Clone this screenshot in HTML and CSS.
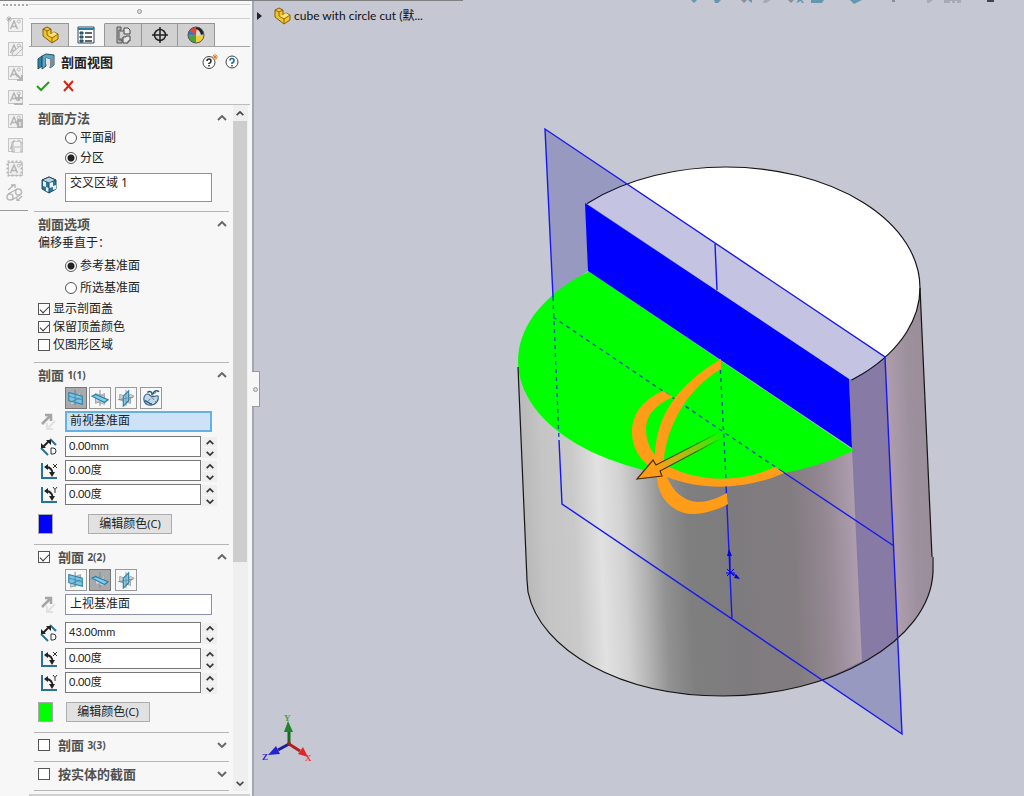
FILE: index.html
```html
<!DOCTYPE html>
<html lang="zh-CN">
<head>
<meta charset="utf-8">
<title>剖面视图</title>
<link rel="stylesheet" href="styles.css">
</head>
<body>
<svg class="defs" aria-hidden="true">
  <defs>
    <symbol id="note" viewBox="0 0 17 17"><rect x="2.500" y="2.500" width="14" height="13" fill="#f0f0f0" stroke="#c6c6c6"/><path d="M4.500 13 8 5l3.500 8M5.800 10.500h4.400" fill="none" stroke="#b4b4b4" stroke-width="1.500"/><circle cx="12.800" cy="5.500" r="1.500" fill="none" stroke="#bcbcbc"/></symbol>
    <symbol id="part" viewBox="0 0 18 18"><path d="M2 3 6 1l4 2v5l3-2 4 2v5l-6 4L2 10z" fill="#f4c62c" stroke="#7b5a12"/><path d="m2 3 4 2 4-2M6 5v4l5 3 6-4M11 12v5" fill="none" stroke="#8d6814"/><path d="m7 9 3-1 3-2 3 2-5 3z" fill="#ffe47a"/></symbol>
    <symbol id="up" viewBox="0 0 12 8"><path d="m2 6 4-4 4 4" fill="none" stroke="currentColor" stroke-width="1.900"/></symbol>
    <symbol id="down" viewBox="0 0 12 8"><path d="m2 2 4 4 4-4" fill="none" stroke="currentColor" stroke-width="1.900"/></symbol>
    <symbol id="front" viewBox="0 0 20 20"><path d="m4 8 11-4v10L4 18z" fill="#c8cdd0" stroke="#9aa1a5"/><path d="m2 4 15 4v9L2 13z" fill="#75c6e8" stroke="#2d7fa6" stroke-width="1.200"/><path d="M9 1v17M2 8l15 4M5 14l10-4" fill="none" stroke="#4b7f99" stroke-width=".9"/></symbol>
    <symbol id="top" viewBox="0 0 20 20"><path d="m5 5 10 3v9L5 14zM5 10l10-5v6L5 16z" fill="#d6d6d6" stroke="#a4a4a4"/><path d="m1 8 4-2 14 6-4 3z" fill="#7dcdf0" stroke="#287ca5" stroke-width="1.200"/><path d="M10 1v6m0 8v4" fill="none" stroke="#708b98"/></symbol>
    <symbol id="right" viewBox="0 0 20 20"><path d="m3 6 12 4v6L3 12zM5 12l10-6 4 2-10 7z" fill="#d2d2d2" stroke="#a0a0a0"/><path d="m7 8 6-6v11l-6 6z" fill="#82cdef" stroke="#287ca5" stroke-width="1.200"/><path d="M10 1v18M1 12l17-3" fill="none" stroke="#65838f" stroke-width=".8"/></symbol>
    <symbol id="face" viewBox="0 0 20 20"><path d="M2 11c0-5 4-7 7-4 4 4 6-1 9 1 1 5-3 10-9 10-4 0-7-3-7-7z" fill="#c2d8ea" stroke="#2b5d86" stroke-width="1.200"/><path d="M6 4c3-3 6 0 5 3m1-1c1-4 4-5 7-3M3 13c3 0 4 3 8 4" fill="none" stroke="#27587d" stroke-width="1.600"/><path d="m8 6 9 10M4 17 16 3" stroke="#4d6877" stroke-dasharray="3 2"/></symbol>
    <symbol id="flip" viewBox="0 0 18 18"><path d="m2 11 8-8M5 2h6v6" fill="none" stroke="#a5a5a5" stroke-width="2.500"/><path d="m15 8-7 7M7 10v6h6" fill="none" stroke="#e2e2e2" stroke-width="2"/></symbol>
    <symbol id="dist" viewBox="0 0 18 18"><path d="m1 10 7 7M10 1l6 6" stroke="#2c7192" stroke-width="2"/><path d="m3 9 6-6" stroke="#222" stroke-width="2"/><path d="M1 10V5l5 5zM6 2h5v5z" fill="#222"/><path d="M11 10v6h2q3 0 3-3t-3-3z" fill="#fff" stroke="#333"/></symbol>
    <symbol id="ang" viewBox="0 0 18 18"><path d="M2 1v15h15" fill="none" stroke="#28739b" stroke-width="2"/><path d="M7 5q5 1 5.500 6" fill="none" stroke="#222" stroke-width="1.800"/><path d="m4 5 4-3v6zM9 10h6l-3 5z" fill="#222"/></symbol>
    <symbol id="angx" viewBox="0 0 18 18"><use href="#ang"/><path d="m13 2 4 4m0-4-4 4" stroke="#333"/></symbol>
    <symbol id="angy" viewBox="0 0 18 18"><use href="#ang"/><path d="m13 1 2 2.500L17 1m-2 2.500V7" fill="none" stroke="#333"/></symbol>
  </defs>
</svg>

<div class="app">
  <nav class="rail" aria-label="注解">
    <button aria-label="新建"><svg><use href="#note"/><path d="M3 0v6M0 3h6M1 1l4 4m0-4L1 5" stroke="#aaa" stroke-width=".8"/></svg></button>
    <button aria-label="编辑"><svg><use href="#note"/><path d="m6 13 1 3 3-1 7-7-3-2z" fill="#eee" stroke="#b6b6b6"/></svg></button>
    <button aria-label="插入"><svg><use href="#note"/><path d="M10 10l6 6m0-5v5h-5" fill="none" stroke="#b4b4b4" stroke-width="2"/></svg></button>
    <button aria-label="增减"><svg><use href="#note"/><path d="M13 6v7M9 10h8M8 16h9" stroke="#b4b4b4" stroke-width="2"/></svg></button>
    <button aria-label="锁定"><svg><use href="#note"/><rect x="11" y="7" width="6" height="9" rx="1" fill="#b3b3b3"/><path d="M13 10h2v4h-2z" fill="#ddd"/></svg></button>
    <button aria-label="保存"><svg><use href="#note"/><path d="M6 6h9l2 2v8H6z" fill="#d4d4d4" stroke="#b4b4b4"/><path d="M8 6h6v4H8zM9 12h5v4H9z" fill="#f3f3f3"/></svg></button>
    <button aria-label="选择"><svg><use href="#note"/><rect x="1.500" y="1.500" width="14" height="14" fill="none" stroke="#b8b8b8" stroke-width="2" stroke-dasharray="2 2"/></svg></button>
    <button aria-label="链接"><svg><circle cx="4" cy="13" r="3" fill="none" stroke="#bbb" stroke-width="1.500"/><circle cx="12.500" cy="8" r="3" fill="none" stroke="#bbb" stroke-width="1.500"/><path d="m2 10 9-5m-5 11 8-5M2 6l6-5M5 1h4v3m7 8-5 5m0-3v3h3" fill="none" stroke="#b3b3b3" stroke-width="1.300"/></svg></button>
  </nav>

  <aside class="panel">
    <div class="grip"><span class="dot"></span></div>
    <nav class="tabs" aria-label="管理器">
      <button class="tab" aria-label="设计树"><svg viewBox="0 0 18 18"><use href="#part"/></svg></button>
      <button class="tab tab-on" aria-label="属性"><svg viewBox="0 0 18 18"><path d="M1 1h16v16H1z" fill="#fff" stroke="#345"/><path d="M1 2h16v2H1z" fill="#267da8"/><path d="M3 6h3v2H3zm0 4h3v2H3zm0 4h3v2H3z" fill="#267da8" stroke="#245"/><path d="M8 7h7M8 11h7M8 15h7" stroke="#333" stroke-width="1.500"/></svg></button>
      <button class="tab" aria-label="配置"><svg viewBox="0 0 18 18"><path d="M3 1h4v3H5v10h3v3H3z" fill="#b5b5b5" stroke="#555"/><path d="M10 2h4l2 2v4h-6zM9 11h3v-1h4v5h-2v2H9z" fill="#e8e8e8" stroke="#444"/><path d="M6 5h4M6 13h3" stroke="#555"/></svg></button>
      <button class="tab" aria-label="尺寸"><svg viewBox="0 0 18 18"><circle cx="9" cy="9" r="5.500" fill="none" stroke="#222" stroke-width="1.500"/><path d="M9 1v16M1 9h16" stroke="#222" stroke-width="1.500"/></svg></button>
      <button class="tab" aria-label="外观"><svg viewBox="0 0 18 18"><circle cx="9" cy="9" r="8" fill="#f1cf32"/><path d="M9 10 1 9a8 8 0 0 0 8 8z" fill="#42a344"/><path d="M9 10 1 9a8 8 0 0 1 3-6z" fill="#3578c8"/><path d="M9 10 3 4a8 8 0 0 1 7-3z" fill="#e64236"/><path d="m9 10 1-9a8 8 0 0 1 7 8z" fill="#d9dadd"/><path d="M9 1q6-1 8 7l-3 1Q13 4 9 3z" fill="#222"/><circle cx="9" cy="9" r="8" fill="none" stroke="#555"/></svg></button>
    </nav>
    <header class="title">
      <svg class="title-icon" viewBox="0 0 18 18"><path d="m1 6 4-3v10l-4 3z" fill="#2885ad" stroke="#254b60"/><path d="m5 3 4-2 8 1v10l-4 3V6L9 5v8l-4 3V6z" fill="#5ba7c6" stroke="#254b60"/><path d="m9 5 4 1v8l-4-3z" fill="#e1e5e8"/><path d="m13 6 4-3v9l-4 3z" fill="#7b8c96"/></svg>
      <h1>剖面视图</h1>
      <button class="bare" aria-label="详细帮助"><svg viewBox="0 0 16 16"><circle cx="7" cy="8.500" r="6" fill="#fff" stroke="#444"/><path d="M5 7q0-2 2-2t2 2-2 2.500V10m0 1v1.500" fill="none" stroke="#222" stroke-width="1.500"/><path d="M13 0v6M10 3h6M11 1l4 4m0-4-4 4" stroke="#dc8132"/></svg></button>
      <button class="bare" aria-label="帮助"><svg viewBox="0 0 16 16"><circle cx="8" cy="8" r="6" fill="#fff" stroke="#444"/><path d="M6 6.500q0-2 2-2t2 2T8 9v1m0 1v1.500" fill="none" stroke="#246f9c" stroke-width="1.700"/></svg></button>
    </header>
    <div class="confirm">
      <button class="bare" aria-label="确定"><svg viewBox="0 0 14 14"><path d="m1 7 4 4 8-8" fill="none" stroke="#299c1a" stroke-width="2"/></svg></button>
      <button class="bare" aria-label="取消"><svg viewBox="0 0 14 14"><path d="m2 2 9 10m0-10L2 12" fill="none" stroke="#d9230f" stroke-width="2"/></svg></button>
    </div>

    <div class="scroll">
      <form class="sections">
        <section class="sec sec-method">
          <h2>剖面方法<svg class="chev"><use href="#up"/></svg></h2>
          <label class="opt inset"><input type="radio" name="method">平面副</label>
          <label class="opt inset"><input type="radio" name="method" checked>分区</label>
          <div class="row region">
            <svg class="ico" viewBox="0 0 18 18"><path d="m2 4 7-3 7 3v9l-7 4-7-4z" fill="#2879a2" stroke="#244b60"/><path d="m2 4 7 3 7-3-7-3z" fill="#b7d4e1" stroke="#244b60"/><path d="m3 5 3 1v5l-3-1zM6 11l3 1v4l-3-1zM9 7l4-1v5l-4 1zM13 10l3-1v4l-3 1z" fill="#e6f2f6"/><path d="M9 7v10" stroke="#244b60"/></svg>
            <textarea aria-label="交叉区域" readonly>交叉区域 1</textarea>
          </div>
        </section>

        <section class="sec sec-options">
          <h2>剖面选项<svg class="chev"><use href="#up"/></svg></h2>
          <p>偏移垂直于：</p>
          <div class="radios">
            <label class="opt inset tall"><input type="radio" name="offset" checked>参考基准面</label>
            <label class="opt inset tall"><input type="radio" name="offset">所选基准面</label>
          </div>
          <label class="opt"><input type="checkbox" checked>显示剖面盖</label>
          <label class="opt"><input type="checkbox" checked>保留顶盖颜色</label>
          <label class="opt"><input type="checkbox">仅图形区域</label>
        </section>

        <section class="sec sec-plane">
          <h2>剖面&nbsp;<small>1(1)</small><svg class="chev"><use href="#up"/></svg></h2>
          <div class="tools">
            <button type="button" class="tool tool-on" aria-label="前视"><svg><use href="#front"/></svg></button>
            <button type="button" class="tool" aria-label="上视"><svg><use href="#top"/></svg></button>
            <button type="button" class="tool spaced" aria-label="右视"><svg><use href="#right"/></svg></button>
            <button type="button" class="tool" aria-label="面"><svg><use href="#face"/></svg></button>
          </div>
          <div class="row"><svg class="ico"><use href="#flip"/></svg><input class="pick pick-on" aria-label="参考剖面 1" value="前视基准面"></div>
          <div class="spins">
            <div class="row"><svg class="ico"><use href="#dist"/></svg><input class="num" aria-label="等距距离 1" value="0.00mm"><span class="step"><button type="button" aria-label="增加"><svg><use href="#up"/></svg></button><button type="button" aria-label="减少"><svg><use href="#down"/></svg></button></span></div>
            <div class="row"><svg class="ico"><use href="#angx"/></svg><input class="num" aria-label="X 旋转 1" value="0.00度"><span class="step"><button type="button" aria-label="增加"><svg><use href="#up"/></svg></button><button type="button" aria-label="减少"><svg><use href="#down"/></svg></button></span></div>
            <div class="row"><svg class="ico"><use href="#angy"/></svg><input class="num" aria-label="Y 旋转 1" value="0.00度"><span class="step"><button type="button" aria-label="增加"><svg><use href="#up"/></svg></button><button type="button" aria-label="减少"><svg><use href="#down"/></svg></button></span></div>
          </div>
          <div class="color color-wide"><span class="swatch blue"></span><button type="button" class="edit">编辑颜色<small>(C)</small></button></div>
        </section>

        <section class="sec sec-plane sec-second">
          <h2><label><input type="checkbox" checked>剖面&nbsp;<small>2(2)</small></label><svg class="chev"><use href="#up"/></svg></h2>
          <div class="tools">
            <button type="button" class="tool" aria-label="前视"><svg><use href="#front"/></svg></button>
            <button type="button" class="tool tool-on" aria-label="上视"><svg><use href="#top"/></svg></button>
            <button type="button" class="tool spaced" aria-label="右视"><svg><use href="#right"/></svg></button>
          </div>
          <div class="row"><svg class="ico"><use href="#flip"/></svg><input class="pick" aria-label="参考剖面 2" value="上视基准面"></div>
          <div class="spins">
            <div class="row"><svg class="ico"><use href="#dist"/></svg><input class="num" aria-label="等距距离 2" value="43.00mm"><span class="step"><button type="button" aria-label="增加"><svg><use href="#up"/></svg></button><button type="button" aria-label="减少"><svg><use href="#down"/></svg></button></span></div>
            <div class="row"><svg class="ico"><use href="#angx"/></svg><input class="num" aria-label="X 旋转 2" value="0.00度"><span class="step"><button type="button" aria-label="增加"><svg><use href="#up"/></svg></button><button type="button" aria-label="减少"><svg><use href="#down"/></svg></button></span></div>
            <div class="row"><svg class="ico"><use href="#angy"/></svg><input class="num" aria-label="Y 旋转 2" value="0.00度"><span class="step"><button type="button" aria-label="增加"><svg><use href="#up"/></svg></button><button type="button" aria-label="减少"><svg><use href="#down"/></svg></button></span></div>
          </div>
          <div class="color"><span class="swatch green"></span><button type="button" class="edit">编辑颜色<small>(C)</small></button></div>
        </section>

        <section class="sec sec-closed">
          <h2><label><input type="checkbox">剖面&nbsp;<small>3(3)</small></label><svg class="chev"><use href="#down"/></svg></h2>
        </section>
        <section class="sec sec-closed">
          <h2><label><input type="checkbox">按实体的截面</label><svg class="chev"><use href="#down"/></svg></h2>
        </section>
      </form>
      <div class="bar">
        <button aria-label="向上滚动"><svg><use href="#up"/></svg></button>
        <div class="track"><div class="thumb"></div></div>
        <button aria-label="向下滚动"><svg><use href="#down"/></svg></button>
      </div>
    </div>
    <div class="foot"></div>
  </aside>

  <main class="view">
    <svg class="scene" viewBox="252 0 772 796" preserveAspectRatio="xMinYMin meet" role="img" aria-label="剖切圆柱体">
      <defs>
        <clipPath id="behind"><path d="M480 132 960 453V132Z"/></clipPath>
        <clipPath id="before"><path d="M480 198 960 522H480Z"/></clipPath>
        <linearGradient id="side" gradientUnits="userSpaceOnUse" x1="528" y1="590" x2="933" y2="572">
          <stop offset="0" stop-color="#b9b9b9"/><stop offset=".05" stop-color="#c5c5c5"/><stop offset=".12" stop-color="#c9c9c9"/><stop offset=".185" stop-color="#e1e1e1"/><stop offset=".24" stop-color="#d2d2d2"/><stop offset=".29" stop-color="#b4b4b4"/><stop offset=".34" stop-color="#919191"/><stop offset=".4" stop-color="#7f7f7f"/><stop offset=".52" stop-color="#7e7b7e"/><stop offset=".66" stop-color="#827c80"/><stop offset=".74" stop-color="#948892"/><stop offset=".82" stop-color="#b09fb0"/><stop offset=".9" stop-color="#b09fb0"/><stop offset=".96" stop-color="#9d909d"/><stop offset="1" stop-color="#9b8e9b"/>
        </linearGradient>
        <linearGradient id="arrow" gradientUnits="userSpaceOnUse" x1="656" y1="468" x2="720" y2="434">
          <stop offset="0" stop-color="#ff9d18"/><stop offset=".5" stop-color="#a2c010"/><stop offset="1" stop-color="#16f600"/>
        </linearGradient>
        <linearGradient id="arrowline" gradientUnits="userSpaceOnUse" x1="656" y1="468" x2="720" y2="434">
          <stop offset="0" stop-color="#4a2b00"/><stop offset=".6" stop-color="#317000"/><stop offset="1" stop-color="#00ff00"/>
        </linearGradient>
      </defs>
      <g fill="#6598b0">
        <path d="M691 0h6l-3 3zM714 0h7l-3 3h-3zM811 0h13l-2 3h-11zM850 0h12l-8 4z"/>
        <path d="M748 0h4v3zM796 3l2-3h4l2 3h-2l-1-2z"/>
      </g>
      <path d="M741 0h6l-3 3zM788 0h6l-3 3zM892 0h3v2h-3z" fill="#888f96"/>
      <path d="M764 0h7l-5 3h-3zM927 0h6l-4 3h-2zM944 0h17v3h-4V1h-2v2h-3V1h-2v2h-6z" fill="#a7abb5"/>
      <path d="M987 0h7v2h-7z" fill="#444"/>

      <path d="M518 367 527 580 528 592C540 650 620 696 723 696 830 696 930 642 933 572L932 557 920 288 849 379 852 449Z" fill="url(#side)"/>
      <ellipse cx="726" cy="288" rx="194" ry="121" fill="#fff" stroke="#151515" stroke-width="1.200" clip-path="url(#behind)"/>
      <path d="M545 129 885 357 902 734 821 680Q842 672 862 661L852 449 849 379 588 271 553 297Z" fill="#000080" fill-opacity=".23"/>
      <ellipse cx="721" cy="361" rx="203" ry="118" fill="#00ff00" clip-path="url(#before)"/>
      <path d="M585 203 849 379 852 448 588 271Z" fill="#0000ff"/>
      <g fill="none" stroke="#151515" stroke-width="1.200">
        <path d="M920 288 932 557"/>
        <path d="M518 367 527 580 528 592C540 650 620 696 723 696 830 696 930 642 933 572V557"/>
      </g>
      <g fill="none" stroke="#1818ee" stroke-width="1.400">
        <path d="M553 297 545 129 885 357 902 734 562 504 559 440M715 244 717 290M726 484 732 619M780 470 894 546"/>
        <path d="M553 297 559 440M553 317 780 470M720 362 726 480" stroke="#0058a8" stroke-dasharray="4 4"/>
      </g>
      <g fill="#ff9d18">
        <path d="M721 359C677 385 655 417 655 458L657 480C660 504 679 515 695 514 709 513 719 509 728 504L727 493C716 499 707 502 697 502 684 501 673 492 667 477L664 458C668 424 688 388 721 369Z"/>
        <path d="M663 391 673 397C655 405 646 415 646 429 646 446 655 459 670 467 702 483 742 482 775 467L784 473C744 491 700 490 667 477 643 467 632 450 632 432 632 412 645 399 663 391Z"/>
      </g>
      <path d="M720 432 656 465 653 460 637 479 662 476 660 471 722 438" fill="url(#arrow)" stroke="url(#arrowline)" stroke-width="1.200"/>
      <g stroke="#0000ee" fill="#0000ee">
        <path d="M730 573v-20M727 569l7 7m0-7-7 7M726 573h9M731 573l6 3" fill="none"/>
        <path d="m729 549-2 7h5zM740 579l-4-5-2 4z" stroke="none"/>
      </g>

      <g class="triad">
        <path d="M289 744v-13" stroke="#176b1d" stroke-width="3"/><path d="m288 721-4 11h9z" fill="#21832a"/>
        <path d="m289 744 11 7" stroke="#b51d20" stroke-width="3"/><path d="m308 757-5-10-5 7z" fill="#e12627"/>
        <path d="m289 744-11 6" stroke="#1c1c9c" stroke-width="3"/><path d="m268 755 8-9 4 8z" fill="#2424cf"/>
        <circle cx="289" cy="744" r="2" fill="#a32020"/>
        <text x="284" y="721" fill="#3fa449">Y</text><text x="305" y="761" fill="#ed3437">X</text><text x="262" y="760" fill="#2727df">Z</text>
      </g>
    </svg>
    <div class="tree"><span class="tri"></span><svg viewBox="0 0 18 18"><use href="#part"/></svg><span>cube with circle cut (默...</span></div>
    <button class="handle" aria-label="折叠面板"><span class="dot"></span></button>
  </main>
  <div class="topline"></div>
</div>
</body>
</html>
```
FILE: styles.css
```css
* { box-sizing: border-box; }

body {
  margin: 0;
  background: #c5c8d3;
  color: #222;
  font: 12px/18px "Noto Sans", "Noto Sans CJK SC", sans-serif;
}

button, input, textarea { font: inherit; color: inherit; margin: 0; }
button { padding: 0; border: 0; background: none; display: flex; align-items: center; justify-content: center; }
svg { display: block; flex: none; }
h1, h2, p { margin: 0; }
.defs { position: absolute; width: 0; height: 0; }

.app { position: relative; display: flex; min-height: 100vh; overflow: hidden; }
.topline { position: absolute; top: 0; left: 0; width: 463px; height: 1px; background: #808080; }

/* Annotation rail */
.rail {
  width: 29px;
  background: #f7f7f7;
  display: flex;
  flex-direction: column;
  align-items: center;
  gap: 7px;
  padding-top: 16px;
}
.rail::before { content: ""; position: absolute; top: 4px; left: 3px; width: 25px; border-top: 2px dotted #aaa; }
.rail::after { content: ""; width: 28px; border-top: 1px solid #9b9b9b; margin-right: 1px; margin-top: 2px; }
.rail svg { width: 17px; height: 17px; }

/* Property panel */
.panel { width: 223px; background: #f7f7f7; display: flex; flex-direction: column; padding-right: 2px; }
.grip { height: 15px; margin-top: 4px; border: solid #cfcfcf; border-width: 1px 0; display: flex; align-items: center; justify-content: center; }
.dot { width: 5px; height: 5px; border: 1px solid #999; border-radius: 50%; background: #ddd; }
.tabs { display: flex; height: 28px; padding: 4px 35px 0 2px; border-bottom: 1px solid #a5a5a5; }
.tab { flex: 1; border: 1px solid #969696; border-width: 1px 1px 0 0; background: #d1d1d1; }
.tab:first-child { border-left-width: 1px; }
.tab-on { background: #f7f7f7; border-top-color: #f7f7f7; }
.tab svg { width: 18px; height: 18px; }
.title { display: flex; align-items: center; height: 29px; padding: 0 10px 0 8px; gap: 6px; }
.title h1 { flex: 1; font-size: 13px; line-height: 18px; }
.title-icon { width: 18px; height: 18px; }
.title .bare svg { width: 16px; height: 16px; }
.confirm { display: flex; gap: 12px; height: 29px; padding: 2px 0 10px 7px; border-bottom: 1px solid #bcbcbc; }
.confirm svg { width: 14px; height: 14px; }

.scroll { flex: 1; display: flex; }
.sections { flex: 1; min-width: 0; padding: 0 4px 0 5px; }
.sec { border-bottom: 1px solid #b5b5b5; padding-top: 2px; }
.sec h2 { display: flex; align-items: center; justify-content: flex-start; height: 20px; padding: 0 1px 0 4px; font-size: 13px; font-weight: 700; color: #505050; }
.sec h2 label { display: flex; align-items: center; }
.sec h2 input { margin-right: 8px; }
.sec h2 small { font-size: 10px; }
small { font-size: 11px; }
.chev { width: 12px; height: 8px; margin-left: auto; color: #666; }
.sec p { height: 18px; padding-left: 4px; }
.sec-method { padding-top: 3px; padding-bottom: 9px; }
.sec-options { padding-bottom: 8px; }
.sec-closed { padding-bottom: 6px; }
.sec-plane { padding-bottom: 10px; }

.opt { display: flex; align-items: center; gap: 3px; height: 18px; padding-left: 4px; }
.inset { height: 20px; padding-left: 31px; }
.tall { height: 22px; }
.radios { padding: 3px 0 1px; }
input[type="radio"], input[type="checkbox"] { appearance: none; width: 12px; height: 12px; border: 1px solid #555; background: #fff; flex: none; }
input[type="radio"] { border-radius: 50%; }
input[type="radio"]:checked { background: radial-gradient(circle, #222 3px, #fff 4px); }
input[type="checkbox"]:checked::before { content: ""; display: block; width: 8px; height: 4px; margin: 2px 0 0 1px; border: solid #333; border-width: 0 0 1px 1px; transform: rotate(-45deg); }

.row { display: flex; align-items: center; height: 21px; }
.ico { width: 18px; height: 18px; margin: 0 7px 0 6px; }
.region { height: 29px; margin-top: 5px; align-items: stretch; }
.region .ico { margin-top: 3px; }
textarea { flex: 1; margin-right: 17px; min-width: 0; padding: 0 4px; line-height: 18px; border: 1px solid #8b90ad; background: #fff; resize: none; overflow: hidden; }
.pick { flex: 1; min-width: 0; height: 21px; margin-right: 17px; padding: 0 4px 4px; border: 1px solid #8b90ad; background: #fff; }
.pick-on { border: 2px solid #62b2e6; padding: 0 3px 3px; background: #cee2f7; }
.num { flex: 1; min-width: 0; height: 21px; padding: 0 3px 3px; border: 1px solid #777; background: #fff; font: 11px/16px Lato, "Noto Sans CJK SC", sans-serif; }
.step { width: 15px; margin-left: 1px; margin-right: 12px; display: flex; flex-direction: column; gap: 1px; padding-top: 2px; }
.step button { height: 10px; background: #efefef; color: #333; }
.step svg { width: 10px; height: 7px; }
.tools { display: flex; gap: 2px; padding-left: 31px; margin: 2px 0; }
.tool { width: 22px; height: 22px; border: 1px solid #999; background: #f7f7f7; }
.tool svg { width: 18px; height: 18px; }
.tool-on { background: #aaa; border-color: #777; }
.spaced { margin: 0 1px 0 2px; }
.spins { display: flex; flex-direction: column; gap: 3px; margin-top: 4px; }
.sec-second .tools { margin-bottom: 3px; }
.sec-second .spins { margin-top: 7px; }
.sec-second .spins .row:first-child { margin-bottom: 2px; }
.color { display: flex; align-items: center; gap: 13px; margin-top: 8px; padding-left: 4px; height: 21px; }
.color-wide { gap: 35px; }
.swatch { width: 15px; height: 20px; border: 1px solid #aaa; }
.blue { background: #00f; }
.green { background: #0f0; }
.edit { width: 84px; height: 20px; border: 1px solid #adadad; background: #e1e1e1; }

.bar { width: 15px; display: flex; flex-direction: column; padding-right: 1px; margin-right: 2px; background: #efefef; }
.bar button { height: 16px; color: #444; }
.bar svg { width: 10px; height: 7px; }
.track { flex: 1; }
.thumb { height: 67.5%; background: #cdcdcd; }
.foot { height: 5px; border-top: 1px solid #f7f7f7; border-bottom: 2px solid #d0d0d0; }

/* Graphics area */
.view { position: relative; flex: 1; min-width: 0; background: #c5c8d3; box-shadow: inset 2px 0 #a4a7af; }
.scene { width: 100%; height: 100vh; }
.triad text { font: 9px "Liberation Serif", serif; font-weight: bold; }
.tree { position: absolute; top: 6px; left: 5px; display: flex; align-items: center; height: 20px; font: 12px/20px Lato, "Noto Sans CJK SC", sans-serif; color: #111; }
.tree svg { width: 18px; height: 18px; margin: 0 3px 0 11px; }
.tri { border: solid transparent; border-width: 4px 0 4px 5px; border-left-color: #222; }
.handle { position: absolute; left: 0; top: 371px; width: 8px; height: 36px; border: 1px solid #999; border-left: 0; background: #f7f7f7; }
```
